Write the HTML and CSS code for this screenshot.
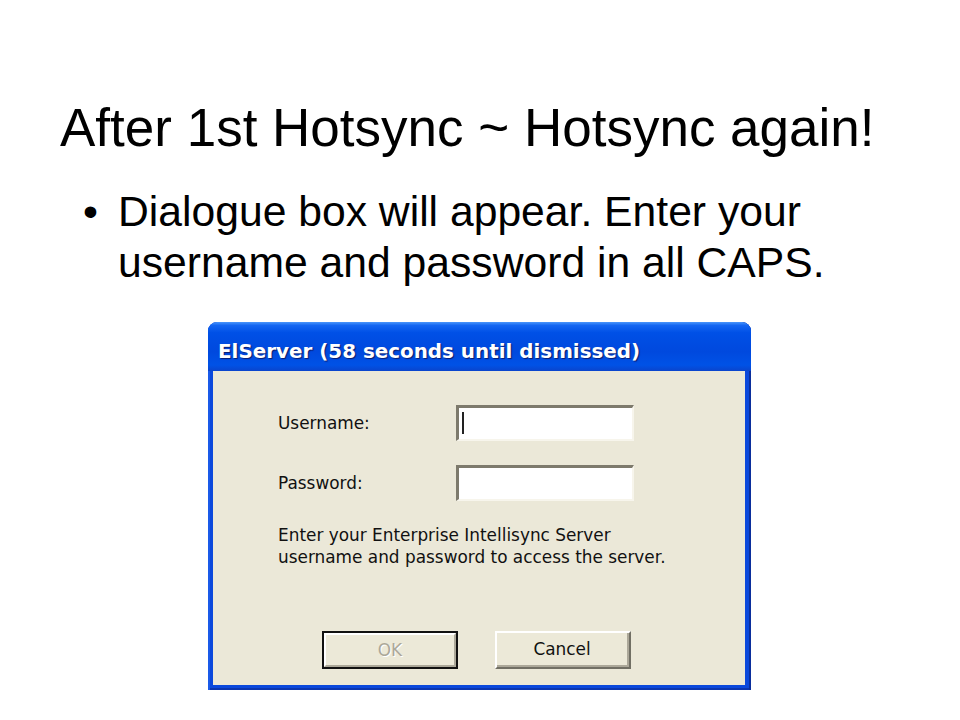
FILE: index.html
```html
<!DOCTYPE html>
<html>
<head>
<meta charset="utf-8">
<link rel="stylesheet" href="styles.css">
</head>
<body>
<div class="slide">
  <h1 class="title">After 1st Hotsync ~ Hotsync again!</h1>
  <ul class="bullets">
    <li>Dialogue box will appear. Enter your username and password in all CAPS.</li>
  </ul>
  <div class="dialog">
    <div class="titlebar">ElServer (58 seconds until dismissed)</div>
    <div class="client">
      <div class="form">
        <span class="label">Username:</span>
        <div class="field"><span class="caret"></span></div>
        <span class="label">Password:</span>
        <div class="field"></div>
      </div>
      <p class="note">Enter your Enterprise Intellisync Server<br>username and password to access the server.</p>
      <div class="buttons">
        <div class="btn btn-default"><span class="btn-inner disabled">OK</span></div>
        <div class="btn"><span class="btn-inner">Cancel</span></div>
      </div>
    </div>
  </div>
</div>
</body>
</html>
```

FILE: styles.css
```css
* { box-sizing: border-box; }
html, body { margin: 0; padding: 0; background: #fff; }
.slide {
  width: 960px;
  height: 720px;
  padding: 96px 0 0 60px;
  font-family: "Liberation Sans", Arial, sans-serif;
  color: #000;
}
.title {
  margin: 0;
  font-weight: normal;
  font-size: 53px;
  line-height: 64px;
}
.bullets {
  list-style: none;
  margin: 26px 0 0 0;
  padding: 0 0 0 58px;
  width: 800px;
  font-size: 42.67px;
  line-height: 51.2px;
}
.bullets li { position: relative; }
.bullets li::before {
  content: "•";
  position: absolute;
  left: -35px;
  top: 0;
}
.dialog {
  margin: 34px 0 0 148px;
  width: 543px;
  height: 368px;
  display: flex;
  flex-direction: column;
  background: #0a48dc;
  border-radius: 9px 9px 0 0;
  padding: 0 6px 5px 5px;
  box-shadow: inset -2px 0 0 #0a2e9c, inset 2px 0 0 #1a5ae8, inset 0 -2px 0 #0b35b0;
}
.titlebar {
  height: 49px;
  margin: 0 -6px 0 -5px;
  padding: 10px 0 0 10px;
  border-radius: 9px 9px 0 0;
  background: linear-gradient(#4a96fb 0, #1466f2 7%, #0050e6 22%, #0049de 60%, #0052e6 88%, #0a44cc 100%);
  color: #fff;
  font-family: "DejaVu Sans", sans-serif;
  font-weight: bold;
  font-size: 19.9px;
  line-height: 39px;
  text-shadow: 1px 1px 1px #0a1c6e;
}
.client {
  flex: 1;
  background: #ebe8d8;
  padding: 34px 0 0 65px;
  font-family: "DejaVu Sans", sans-serif;
  font-size: 16.9px;
  color: #111;
}
.form {
  display: grid;
  grid-template-columns: 178px 178px;
  grid-auto-rows: 36px;
  row-gap: 24px;
  align-items: center;
}
.label { line-height: 20px; }
.field {
  height: 36px;
  background: #fff;
  border-top: 3px solid #7d7a6c;
  border-left: 3px solid #7d7a6c;
  border-bottom: 2px solid #f7f5ec;
  border-right: 2px solid #f7f5ec;
  padding: 4px 0 0 3px;
}
.caret {
  display: block;
  width: 2px;
  height: 22px;
  background: #222;
}
.note {
  margin: 23px 0 0 0;
  line-height: 22px;
}
.buttons {
  display: flex;
  gap: 37px;
  margin: 63px 0 0 44px;
}
.btn {
  width: 136px;
  height: 38px;
  border-top: 2px solid #fff;
  border-left: 2px solid #fff;
  border-right: 2px solid #716f64;
  border-bottom: 2px solid #716f64;
  background: #ece9d8;
}
.btn-inner {
  display: flex;
  align-items: center;
  justify-content: center;
  height: 100%;
  border-right: 2px solid #aca899;
  border-bottom: 2px solid #aca899;
  color: #111;
}
.btn-default {
  border: 2px solid #111;
}
.btn-default .btn-inner {
  border-top: 2px solid #fff;
  border-left: 2px solid #fff;
}
.disabled {
  color: #aca899;
  text-shadow: 1px 1px 0 #fff;
}
```
